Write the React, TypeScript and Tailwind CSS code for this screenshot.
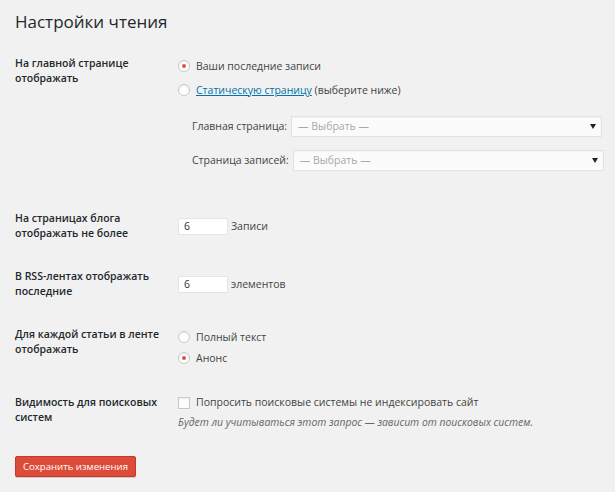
import React from "react";

function Radio({ checked }: { checked?: boolean }) {
  return (
    <span className="inline-flex items-center justify-center w-[12px] h-[12px] rounded-full border border-[#c5c9cc] bg-white shadow-[inset_0_1px_2px_rgba(0,0,0,0.08)] shrink-0">
      {checked && <span className="w-[4px] h-[4px] rounded-full bg-[#d9534f]" />}
    </span>
  );
}

function Select({ width }: { width: number }) {
  return (
    <div
      className="h-[21px] shrink-0 flex items-center justify-between bg-[#fbfbfb] border border-[#e2e2e2] shadow-[inset_0_1px_2px_rgba(0,0,0,0.04)] pl-[6px] pr-[5px]"
      style={{ width }}
    >
      <span className="text-[#a9a9a9]">— Выбрать —</span>
      <svg width="6" height="5" viewBox="0 0 6 5">
        <path d="M0 0 L6 0 L3 5 Z" fill="#222" />
      </svg>
    </div>
  );
}

export default function App() {
  return (
    <div className="w-[615px] h-[492px] overflow-hidden bg-[#f1f1f1] font-['Open_Sans',sans-serif] text-[#444] text-[10.5px] leading-[15px] px-[15px] whitespace-nowrap">
      <h1 className="pt-[10px] text-[17px] leading-[24px] text-[#23282d] font-normal">Настройки чтения</h1>

      {/* Row 1 */}
      <div className="flex mt-[22px] h-[155px]">
        <div className="w-[163px] shrink-0 font-semibold text-[#23282d]">
          На главной странице
          <br />
          отображать
        </div>
        <div className="flex flex-col">
          <div className="flex items-center gap-[6px] h-[20px]">
            <Radio checked />
            <span>Ваши последние записи</span>
          </div>
          <div className="flex items-center gap-[6px] h-[20px] mt-[4px]">
            <Radio />
            <span>
              <span className="text-[#0073aa] underline">Статическую страницу</span> (выберите ниже)
            </span>
          </div>
          <div className="flex items-center mt-[16px] pl-[14px] gap-[4px]">
            <span>Главная страница:</span>
            <Select width={311} />
          </div>
          <div className="flex items-center mt-[13px] pl-[14px] gap-[4px]">
            <span>Страница записей:</span>
            <Select width={311} />
          </div>
        </div>
      </div>

      {/* Row 2 */}
      <div className="flex h-[58px]">
        <div className="w-[163px] shrink-0 font-semibold text-[#23282d]">
          На страницах блога
          <br />
          отображать не более
        </div>
        <div className="flex items-center gap-[3px] mt-[7px] h-[17px]">
          <div className="w-[50px] h-[17px] bg-white border border-[#e5e5e5] pl-[5px] flex items-center text-[#333]">6</div>
          <span>Записи</span>
        </div>
      </div>

      {/* Row 3 */}
      <div className="flex h-[58px]">
        <div className="w-[163px] shrink-0 font-semibold text-[#23282d]">
          В RSS-лентах отображать
          <br />
          последние
        </div>
        <div className="flex items-center gap-[3px] mt-[7px] h-[17px]">
          <div className="w-[50px] h-[17px] bg-white border border-[#e5e5e5] pl-[5px] flex items-center text-[#333]">6</div>
          <span>элементов</span>
        </div>
      </div>

      {/* Row 4 */}
      <div className="flex h-[68px]">
        <div className="w-[163px] shrink-0 font-semibold text-[#23282d]">
          Для каждой статьи в ленте
          <br />
          отображать
        </div>
        <div className="flex flex-col">
          <div className="flex items-center gap-[6px] h-[20px]">
            <Radio />
            <span>Полный текст</span>
          </div>
          <div className="flex items-center gap-[6px] h-[20px] mt-[1px]">
            <Radio checked />
            <span>Анонс</span>
          </div>
        </div>
      </div>

      {/* Row 5 */}
      <div className="flex h-[61px]">
        <div className="w-[163px] shrink-0 font-semibold text-[#23282d]">
          Видимость для поисковых
          <br />
          систем
        </div>
        <div className="flex flex-col">
          <div className="flex items-center gap-[6px] h-[15px]">
            <span className="w-[12px] h-[12px] border border-[#c5c9cc] bg-white shadow-[inset_0_1px_2px_rgba(0,0,0,0.08)] shrink-0" />
            <span>Попросить поисковые системы не индексировать сайт</span>
          </div>
          <div className="mt-[5px] italic text-[#666] text-[10.4px]">Будет ли учитываться этот запрос — зависит от поисковых систем.</div>
        </div>
      </div>

      <button className="h-[21px] px-[7px] bg-[#dd4b39] border border-[#c9372a] rounded-[2px] text-white text-[9.6px] leading-[19px] shadow-[0_1px_0_rgba(0,0,0,0.15)]">
        Сохранить изменения
      </button>
    </div>
  );
}
